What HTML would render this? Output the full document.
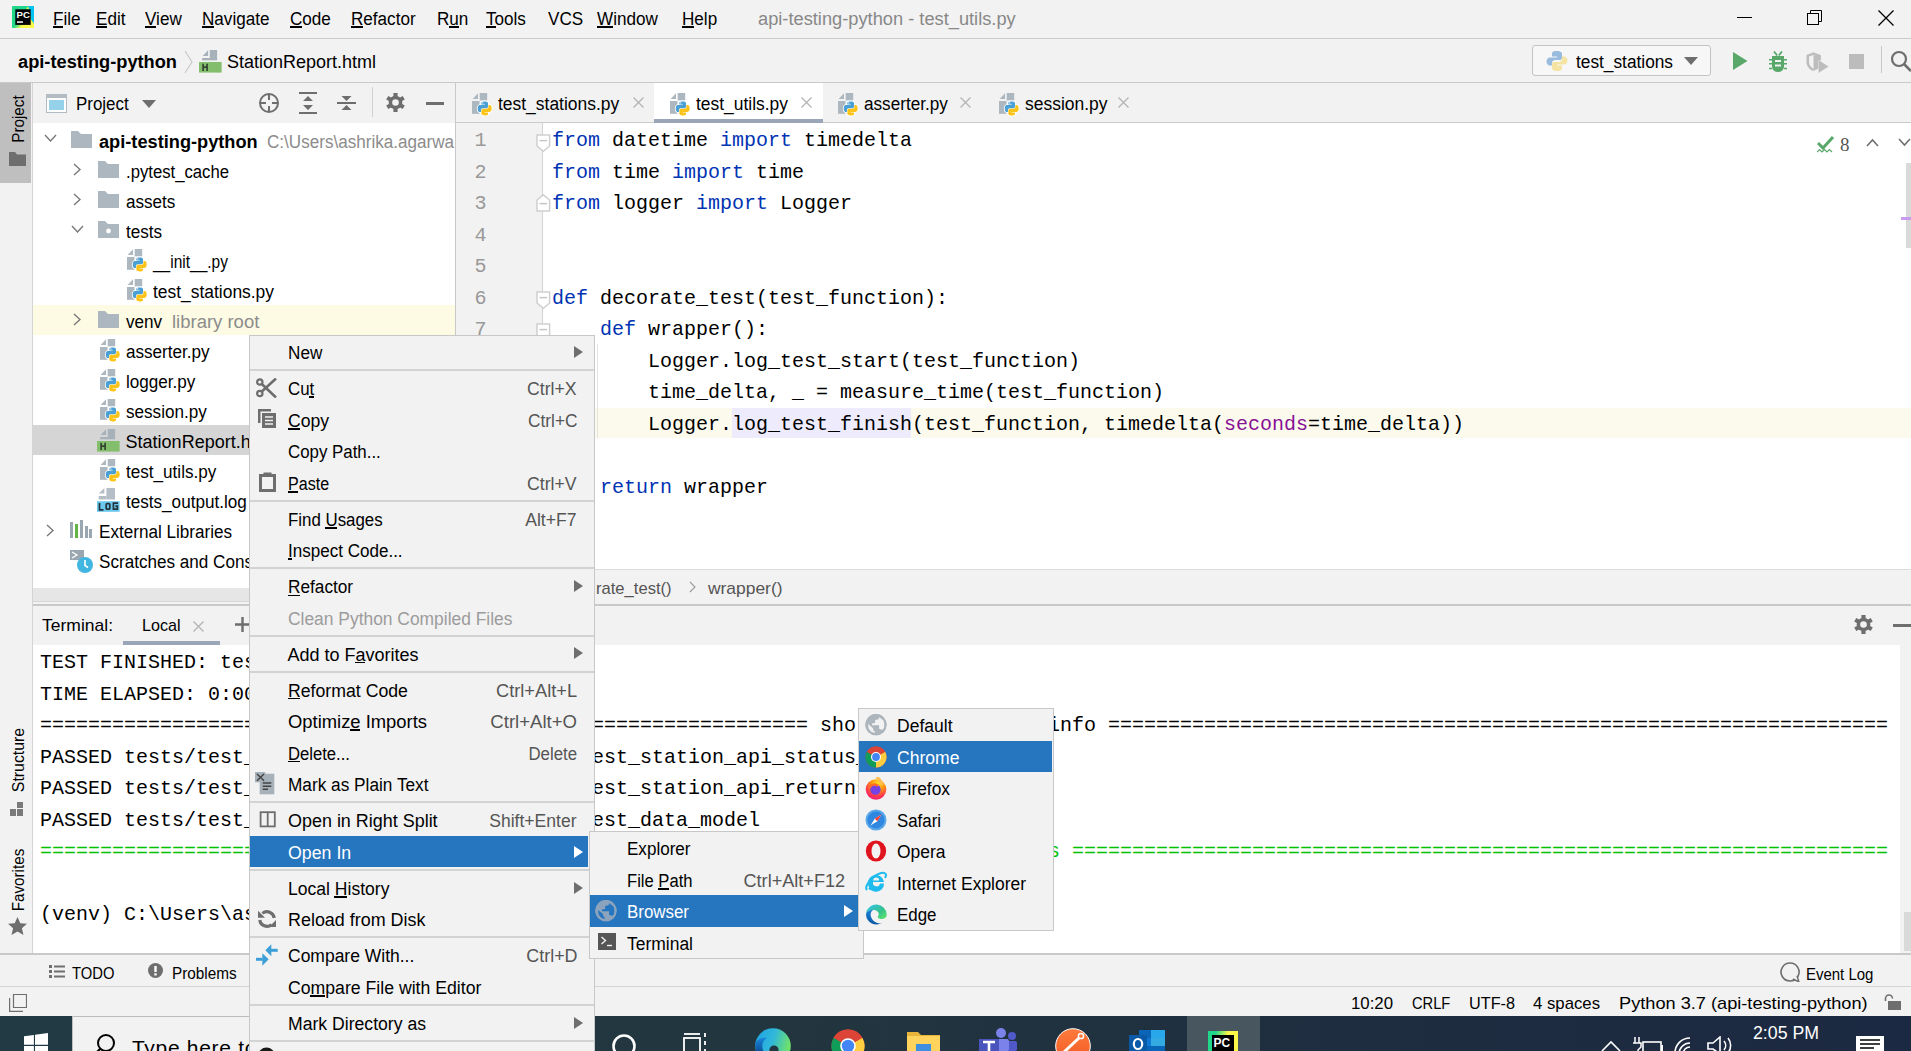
<!DOCTYPE html>
<html><head><meta charset="utf-8"><style>
html,body{margin:0;padding:0;width:1911px;height:1051px;overflow:hidden;background:#f2f2f2;}
body>*{position:absolute;}
.t{white-space:pre;font-family:'Liberation Sans', sans-serif;}

</style></head><body>
<div style="left:0px;top:0px;width:1911px;height:38px;background:#f2f2f2;"></div>
<div style="left:0px;top:38px;width:1911px;height:1px;background:#cbcbcb;"></div>
<svg style="left:12px;top:5.8px;" width="22" height="22" viewBox="0 0 22 22"><defs><linearGradient id="pcg" x1="0.1" y1="0.2" x2="0.9" y2="0.9"><stop offset="0.45" stop-color="#21d789"/><stop offset="0.7" stop-color="#fcf84a"/></linearGradient></defs>
<rect x="0" y="0" width="22" height="22" rx="1" fill="url(#pcg)"/><path d="M16 0H22V17.5L19 13.5z" fill="#07c3f2"/><path d="M14 3.3L15.8 0.3L17.3 3.3z" fill="#c9f257"/>
<rect x="3.3" y="3.3" width="15.4" height="15.6" fill="#000"/>
<text x="4.6" y="12" font-family="Liberation Sans" font-weight="bold" font-size="9.6" fill="#fff">PC</text><rect x="5" y="15.3" width="6" height="1.5" fill="#fff"/></svg>
<div style="left:52.70px;top:26.20px;width:10.45px;height:1.5px;background:#000;"></div>
<div class="t" style="left:52.7px;top:9.00px;line-height:20px;font-size:18px;color:#000;transform:scaleX(0.9500);transform-origin:0 0;">File</div>
<div style="left:96.00px;top:26.20px;width:11.41px;height:1.5px;background:#000;"></div>
<div class="t" style="left:96px;top:9.00px;line-height:20px;font-size:18px;color:#000;transform:scaleX(0.9500);transform-origin:0 0;">Edit</div>
<div style="left:145.00px;top:26.20px;width:11.41px;height:1.5px;background:#000;"></div>
<div class="t" style="left:145px;top:9.00px;line-height:20px;font-size:18px;color:#000;transform:scaleX(0.9500);transform-origin:0 0;">View</div>
<div style="left:201.70px;top:26.20px;width:12.35px;height:1.5px;background:#000;"></div>
<div class="t" style="left:201.7px;top:9.00px;line-height:20px;font-size:18px;color:#000;transform:scaleX(0.9500);transform-origin:0 0;">Navigate</div>
<div style="left:289.60px;top:26.20px;width:12.35px;height:1.5px;background:#000;"></div>
<div class="t" style="left:289.6px;top:9.00px;line-height:20px;font-size:18px;color:#000;transform:scaleX(0.9500);transform-origin:0 0;">Code</div>
<div style="left:350.70px;top:26.20px;width:12.35px;height:1.5px;background:#000;"></div>
<div class="t" style="left:350.7px;top:9.00px;line-height:20px;font-size:18px;color:#000;transform:scaleX(0.9500);transform-origin:0 0;">Refactor</div>
<div style="left:449.15px;top:26.20px;width:9.51px;height:1.5px;background:#000;"></div>
<div class="t" style="left:436.8px;top:9.00px;line-height:20px;font-size:18px;color:#000;transform:scaleX(0.9500);transform-origin:0 0;">Run</div>
<div style="left:485.70px;top:26.20px;width:10.45px;height:1.5px;background:#000;"></div>
<div class="t" style="left:485.7px;top:9.00px;line-height:20px;font-size:18px;color:#000;transform:scaleX(0.9500);transform-origin:0 0;">Tools</div>
<div class="t" style="left:548px;top:9.00px;line-height:20px;font-size:18px;color:#000;transform:scaleX(0.9500);transform-origin:0 0;">VCS</div>
<div style="left:597.00px;top:26.20px;width:16.14px;height:1.5px;background:#000;"></div>
<div class="t" style="left:597px;top:9.00px;line-height:20px;font-size:18px;color:#000;transform:scaleX(0.9500);transform-origin:0 0;">Window</div>
<div style="left:682.00px;top:26.20px;width:12.35px;height:1.5px;background:#000;"></div>
<div class="t" style="left:682px;top:9.00px;line-height:20px;font-size:18px;color:#000;transform:scaleX(0.9500);transform-origin:0 0;">Help</div>
<div class="t" style="left:758px;top:9.00px;line-height:20px;font-size:18px;color:#888;transform:scaleX(1.0141);transform-origin:0 0;">api-testing-python - test_utils.py</div>
<div style="left:1737px;top:17px;width:15px;height:1px;background:#000;"></div>
<svg style="left:1806px;top:9px;" width="18" height="16" viewBox="0 0 18 16"><rect x="1.5" y="4.5" width="11" height="11" fill="none" stroke="#000" stroke-width="1"/><path d="M4.5 4.5V1.5h11v11h-3" fill="none" stroke="#000" stroke-width="1"/></svg>
<svg style="left:1877px;top:9px;" width="18" height="18" viewBox="0 0 18 18"><path d="M1.5 1.5L16.5 16.5M16.5 1.5L1.5 16.5" stroke="#000" stroke-width="1.3"/></svg>
<div style="left:0px;top:39px;width:1911px;height:43px;background:#f2f2f2;"></div>
<div style="left:0px;top:82px;width:1911px;height:1px;background:#c9c9c9;"></div>
<div class="t" style="left:18px;top:52.30px;line-height:20px;font-size:18px;color:#000;font-weight:bold;transform:scaleX(1.0129);transform-origin:0 0;">api-testing-python</div>
<svg style="left:184px;top:50px;" width="9" height="24" viewBox="0 0 9 24"><path d="M1 1L8 12L1 23" fill="none" stroke="#c8c8c8" stroke-width="1.2"/></svg>
<svg style="left:199px;top:50.4px;" width="23" height="23" viewBox="0 0 23 23"><path d="M3.7 6L9.1 0.3V6z" fill="#a7b1b9"/><rect x="10.8" y="0" width="7.3" height="10.3" fill="#a7b1b9"/><rect x="3.1" y="8" width="7.8" height="2.3" fill="#a7b1b9"/>
<rect x="0" y="12" width="22.6" height="10.6" fill="#82be6c"/><path d="M4.1 13.7v7.4M8.1 13.7v7.4M4.1 17.2h4" stroke="#344532" stroke-width="1.7"/></svg>
<div class="t" style="left:227px;top:52.30px;line-height:20px;font-size:18px;color:#000;">StationReport.html</div>
<div style="left:1532px;top:45px;width:179px;height:31px;background:#f7f7f7;border:1px solid #c4c4c4;border-radius:3px;box-sizing:border-box;"></div>
<svg style="left:1546px;top:50px;" width="22" height="22" viewBox="0 0 22 22"><g opacity="0.55"><path d="M10.5 1c-4 0-4.5 1.5-4.5 3v2.5h5v1H4c-2 0-3.5 1.7-3.5 4s1.5 4 3.5 4h2v-2.5c0-1.6 1.3-3 3-3h4.5c1.5 0 2.5-1.2 2.5-2.6V4c0-1.6-1.5-3-5.5-3z" fill="#4d8bc9"/>
<path d="M11.5 21c4 0 4.5-1.5 4.5-3v-2.5h-5v-1h7c2 0 3.5-1.7 3.5-4s-1.5-4-3.5-4h-2v2.5c0 1.6-1.3 3-3 3H8.5C7 12 6 13.2 6 14.6V18c0 1.6 1.5 3 5.5 3z" fill="#f4d35e"/></g></svg>
<div class="t" style="left:1575.5px;top:51.50px;line-height:20px;font-size:18px;color:#000;transform:scaleX(0.9599);transform-origin:0 0;">test_stations</div>
<svg style="left:1684px;top:57px;" width="14" height="8" viewBox="0 0 14 8"><path d="M0 0h14L7 8z" fill="#6e6e6e"/></svg>
<svg style="left:1733px;top:52px;" width="15" height="18" viewBox="0 0 15 18"><path d="M0 0L14.5 9L0 18z" fill="#59a869"/></svg>
<svg style="left:1769px;top:50.5px;" width="18" height="21" viewBox="0 0 18 21"><path d="M3 5h12v10.5a6 5.5 0 0 1 -12 0z" fill="#59a869"/><path d="M5 0.5L8.2 4.5M13 0.5L9.8 4.5" stroke="#59a869" stroke-width="1.8"/><path d="M0 8.7h3M15 8.7h3M0 12.8h3M15 12.8h3M0 17.5h3M15 17.5h3" stroke="#59a869" stroke-width="1.6"/><rect x="6" y="9" width="6" height="2" fill="#f2f2f2"/><rect x="6" y="13.5" width="6" height="2" fill="#f2f2f2"/></svg>
<svg style="left:1806px;top:51.5px;" width="23" height="21" viewBox="0 0 23 21"><path d="M0.5 3L7.5 0.3L14.5 3V8H12V4.5L7.5 3L3 4.5V10c0 3 2 5.5 4.5 6.5V19C3.5 17.8 0.5 14 0.5 10z" fill="#bdbdbd"/><path d="M7.5 3.2L14.8 3.2V8.5H12.2V16.5L7.5 19z" fill="#bdbdbd"/><path d="M12.5 8L22.5 14.5L12.5 21z" fill="#bdbdbd"/></svg>
<div style="left:1848.5px;top:53.5px;width:15px;height:15px;background:#bcbcbc;"></div>
<div style="left:1881px;top:46px;width:1px;height:27px;background:#c9c9c9;"></div>
<svg style="left:1890px;top:50px;" width="21" height="23" viewBox="0 0 21 23"><circle cx="9" cy="9" r="7" fill="none" stroke="#6e6e6e" stroke-width="2.2"/><path d="M14 14L21 21" stroke="#6e6e6e" stroke-width="2.6"/></svg>
<div style="left:0px;top:83px;width:32px;height:870px;background:#f2f2f2;"></div>
<div style="left:0px;top:83px;width:31px;height:100px;background:#bfbfbf;"></div>
<div style="left:32px;top:83px;width:1px;height:870px;background:#d4d4d4;"></div>
<div class="t" style="left:-41.25px;top:106.50px;width:120px;height:24px;line-height:24px;font-size:16px;color:#000;text-align:center;transform:rotate(-90deg) scaleX(0.9500);">Project</div>
<svg style="left:9px;top:151.5px;" width="17" height="14" viewBox="0 0 17 14"><path d="M0 0h6l2 2.5h9V14H0z" fill="#6e6e6e"/></svg>
<div class="t" style="left:-41.05px;top:748.40px;width:120px;height:24px;line-height:24px;font-size:16px;color:#000;text-align:center;transform:rotate(-90deg) scaleX(0.9900);">Structure</div>
<svg style="left:10px;top:802px;" width="14" height="14" viewBox="0 0 14 14"><rect x="0" y="7" width="6" height="7" fill="#7a7a7a"/><rect x="7" y="7" width="6" height="7" fill="#7a7a7a"/><rect x="7" y="0" width="6" height="6" fill="#7a7a7a"/></svg>
<div class="t" style="left:-41.05px;top:867.70px;width:120px;height:24px;line-height:24px;font-size:16px;color:#000;text-align:center;transform:rotate(-90deg) scaleX(0.9500);">Favorites</div>
<svg style="left:8px;top:917px;" width="19" height="18" viewBox="0 0 19 18"><path d="M9.5 0l2.8 6.2l6.7 0.6l-5.1 4.5l1.6 6.7l-6-3.6l-6 3.6l1.6-6.7L0 6.8l6.7-0.6z" fill="#6e6e6e"/></svg>
<div style="left:33px;top:83px;width:422px;height:40px;background:#f2f2f2;"></div>
<div style="left:33px;top:123px;width:422px;height:465px;background:#fff;"></div>
<div style="left:33px;top:588px;width:422px;height:13px;background:#e6e6e6;"></div>
<svg style="left:46px;top:94px;" width="21" height="19" viewBox="0 0 21 19"><rect x="0.5" y="0.5" width="20" height="18" fill="#fff" stroke="#b3bcc3"/><rect x="0" y="0" width="21" height="4" fill="#b3bcc3"/><rect x="3" y="6" width="15" height="10" fill="#95d2ea"/></svg>
<div class="t" style="left:75.8px;top:94.00px;line-height:20px;font-size:18px;color:#000;transform:scaleX(0.9407);transform-origin:0 0;">Project</div>
<svg style="left:142px;top:100px;" width="14" height="8" viewBox="0 0 14 8"><path d="M0 0h14L7 8z" fill="#6e6e6e"/></svg>
<svg style="left:258px;top:92px;" width="22" height="22" viewBox="0 0 22 22"><circle cx="11" cy="11" r="9" fill="none" stroke="#6e6e6e" stroke-width="2"/><path d="M11 2v6M11 14v6M2 11h6M14 11h6" stroke="#6e6e6e" stroke-width="2"/></svg>
<svg style="left:299px;top:92px;" width="18" height="22" viewBox="0 0 18 22"><path d="M0 1h18M0 21h18" stroke="#6e6e6e" stroke-width="2"/><path d="M9 4l5 5H4zM9 18l5-5H4z" fill="#6e6e6e"/></svg>
<svg style="left:337px;top:92px;" width="19" height="22" viewBox="0 0 19 22"><path d="M0 11h19" stroke="#6e6e6e" stroke-width="2"/><path d="M9.5 9l-5-5h10zM9.5 13l-5 5h10z" fill="#6e6e6e"/></svg>
<div style="left:372px;top:87px;width:1px;height:30px;background:#d0d0d0;"></div>
<svg style="left:386px;top:93px;" width="19" height="19" viewBox="0 0 19 19"><circle cx="9.5" cy="9.5" r="6.84" fill="#6e6e6e"/><rect x="7.41" y="0" width="4.18" height="19.00" fill="#6e6e6e" transform="rotate(0 9.5 9.5)"/><rect x="7.41" y="0" width="4.18" height="19.00" fill="#6e6e6e" transform="rotate(60 9.5 9.5)"/><rect x="7.41" y="0" width="4.18" height="19.00" fill="#6e6e6e" transform="rotate(120 9.5 9.5)"/><circle cx="9.5" cy="9.5" r="3.32" fill="#f2f2f2"/></svg>
<div style="left:426px;top:102px;width:18px;height:3px;background:#6e6e6e;"></div>
<svg style="left:44px;top:134px;" width="13" height="8" viewBox="0 0 13 8"><path d="M1 1L6.5 7L12 1" fill="none" stroke="#787878" stroke-width="1.4"/></svg>
<svg style="left:70.5px;top:131px;" width="21" height="17" viewBox="0 0 21 17"><path d="M0 0h7l3 3h11v14H0z" fill="#adb7bf"/></svg>
<div class="t" style="left:98.6px;top:132.00px;line-height:20px;font-size:18px;color:#000;font-weight:bold;transform:scaleX(1.0109);transform-origin:0 0;">api-testing-python</div>
<div class="t" style="left:267.4px;top:132.00px;line-height:20px;font-size:18px;color:#8c8c8c;transform:scaleX(0.9489);transform-origin:0 0;">C:\Users\ashrika.agarwa</div>
<div style="left:455px;top:123px;width:456px;height:0px;background:#fff;"></div>
<svg style="left:73px;top:163px;" width="8" height="13" viewBox="0 0 8 13"><path d="M1 1L7 6.5L1 12" fill="none" stroke="#787878" stroke-width="1.4"/></svg>
<svg style="left:97.5px;top:161px;" width="21" height="17" viewBox="0 0 21 17"><path d="M0 0h7l3 3h11v14H0z" fill="#adb7bf"/></svg>
<div class="t" style="left:125.6px;top:162.00px;line-height:20px;font-size:18px;color:#000;transform:scaleX(0.9274);transform-origin:0 0;">.pytest_cache</div>
<svg style="left:73px;top:193px;" width="8" height="13" viewBox="0 0 8 13"><path d="M1 1L7 6.5L1 12" fill="none" stroke="#787878" stroke-width="1.4"/></svg>
<svg style="left:97.5px;top:191px;" width="21" height="17" viewBox="0 0 21 17"><path d="M0 0h7l3 3h11v14H0z" fill="#adb7bf"/></svg>
<div class="t" style="left:125.6px;top:192.00px;line-height:20px;font-size:18px;color:#000;transform:scaleX(0.9500);transform-origin:0 0;">assets</div>
<svg style="left:71px;top:225px;" width="13" height="8" viewBox="0 0 13 8"><path d="M1 1L6.5 7L12 1" fill="none" stroke="#787878" stroke-width="1.4"/></svg>
<svg style="left:97.5px;top:221px;" width="21" height="17" viewBox="0 0 21 17"><path d="M0 0h7l3 3h11v14H0z" fill="#adb7bf"/><circle cx="10.5" cy="10" r="2.4" fill="#fff"/></svg>
<div class="t" style="left:125.6px;top:222.00px;line-height:20px;font-size:18px;color:#000;transform:scaleX(0.9500);transform-origin:0 0;">tests</div>
<svg style="left:125.8px;top:248.3px;" width="24" height="26" viewBox="0 0 24 26"><g transform="translate(1,1)"><path d="M0.6 6L6 0.3V6z" fill="#adb7bf"/><rect x="7.7" y="0" width="7.5" height="7.4" fill="#adb7bf"/><rect x="0" y="8" width="7.5" height="12.8" fill="#adb7bf"/>
<g transform="translate(5.6,8.4) scale(0.71)"><path d="M9.8 0.2C5 0.2 5.3 2.3 5.3 2.3V4.5H10V5.2H3.4C3.4 5.2 0.2 4.8 0.2 9.9C0.2 15 3 14.8 3 14.8H4.7V12.4C4.7 12.4 4.6 9.6 7.4 9.6H12.1C12.1 9.6 14.7 9.7 14.7 7.1V2.8C14.7 2.8 15.1 0.2 9.8 0.2Z" fill="none" stroke="#fff" stroke-width="2.6"/><path d="M10.2 19.8C15 19.8 14.7 17.7 14.7 17.7V15.5H10V14.8H16.6C16.6 14.8 19.8 15.2 19.8 10.1C19.8 5 17 5.2 17 5.2H15.3V7.6C15.3 7.6 15.4 10.4 12.6 10.4H7.9C7.9 10.4 5.3 10.3 5.3 12.9V17.2C5.3 17.2 4.9 19.8 10.2 19.8Z" fill="none" stroke="#fff" stroke-width="2.6"/><path d="M9.8 0.2C5 0.2 5.3 2.3 5.3 2.3V4.5H10V5.2H3.4C3.4 5.2 0.2 4.8 0.2 9.9C0.2 15 3 14.8 3 14.8H4.7V12.4C4.7 12.4 4.6 9.6 7.4 9.6H12.1C12.1 9.6 14.7 9.7 14.7 7.1V2.8C14.7 2.8 15.1 0.2 9.8 0.2Z" fill="#4a9fd5"/><path d="M10.2 19.8C15 19.8 14.7 17.7 14.7 17.7V15.5H10V14.8H16.6C16.6 14.8 19.8 15.2 19.8 10.1C19.8 5 17 5.2 17 5.2H15.3V7.6C15.3 7.6 15.4 10.4 12.6 10.4H7.9C7.9 10.4 5.3 10.3 5.3 12.9V17.2C5.3 17.2 4.9 19.8 10.2 19.8Z" fill="#fcc419"/><circle cx="7.3" cy="2.2" r="0.9" fill="#fff"/></g></g></svg>
<div class="t" style="left:152.6px;top:252.00px;line-height:20px;font-size:18px;color:#000;transform:scaleX(0.8614);transform-origin:0 0;">__init__.py</div>
<svg style="left:125.8px;top:278.3px;" width="24" height="26" viewBox="0 0 24 26"><g transform="translate(1,1)"><path d="M0.6 6L6 0.3V6z" fill="#adb7bf"/><rect x="7.7" y="0" width="7.5" height="7.4" fill="#adb7bf"/><rect x="0" y="8" width="7.5" height="12.8" fill="#adb7bf"/>
<g transform="translate(5.6,8.4) scale(0.71)"><path d="M9.8 0.2C5 0.2 5.3 2.3 5.3 2.3V4.5H10V5.2H3.4C3.4 5.2 0.2 4.8 0.2 9.9C0.2 15 3 14.8 3 14.8H4.7V12.4C4.7 12.4 4.6 9.6 7.4 9.6H12.1C12.1 9.6 14.7 9.7 14.7 7.1V2.8C14.7 2.8 15.1 0.2 9.8 0.2Z" fill="none" stroke="#fff" stroke-width="2.6"/><path d="M10.2 19.8C15 19.8 14.7 17.7 14.7 17.7V15.5H10V14.8H16.6C16.6 14.8 19.8 15.2 19.8 10.1C19.8 5 17 5.2 17 5.2H15.3V7.6C15.3 7.6 15.4 10.4 12.6 10.4H7.9C7.9 10.4 5.3 10.3 5.3 12.9V17.2C5.3 17.2 4.9 19.8 10.2 19.8Z" fill="none" stroke="#fff" stroke-width="2.6"/><path d="M9.8 0.2C5 0.2 5.3 2.3 5.3 2.3V4.5H10V5.2H3.4C3.4 5.2 0.2 4.8 0.2 9.9C0.2 15 3 14.8 3 14.8H4.7V12.4C4.7 12.4 4.6 9.6 7.4 9.6H12.1C12.1 9.6 14.7 9.7 14.7 7.1V2.8C14.7 2.8 15.1 0.2 9.8 0.2Z" fill="#4a9fd5"/><path d="M10.2 19.8C15 19.8 14.7 17.7 14.7 17.7V15.5H10V14.8H16.6C16.6 14.8 19.8 15.2 19.8 10.1C19.8 5 17 5.2 17 5.2H15.3V7.6C15.3 7.6 15.4 10.4 12.6 10.4H7.9C7.9 10.4 5.3 10.3 5.3 12.9V17.2C5.3 17.2 4.9 19.8 10.2 19.8Z" fill="#fcc419"/><circle cx="7.3" cy="2.2" r="0.9" fill="#fff"/></g></g></svg>
<div class="t" style="left:152.6px;top:282.00px;line-height:20px;font-size:18px;color:#000;transform:scaleX(0.9675);transform-origin:0 0;">test_stations.py</div>
<div style="left:33px;top:305px;width:422px;height:30px;background:#fdfbe3;"></div>
<svg style="left:73px;top:313px;" width="8" height="13" viewBox="0 0 8 13"><path d="M1 1L7 6.5L1 12" fill="none" stroke="#787878" stroke-width="1.4"/></svg>
<svg style="left:97.5px;top:311px;" width="21" height="17" viewBox="0 0 21 17"><path d="M0 0h7l3 3h11v14H0z" fill="#adb7bf"/></svg>
<div class="t" style="left:125.6px;top:312.00px;line-height:20px;font-size:18px;color:#000;transform:scaleX(0.9500);transform-origin:0 0;">venv</div>
<div class="t" style="left:171.5px;top:312.00px;line-height:20px;font-size:18px;color:#8c8c8c;transform:scaleX(1.0268);transform-origin:0 0;">library root</div>
<svg style="left:99.4px;top:338.3px;" width="24" height="26" viewBox="0 0 24 26"><g transform="translate(1,1)"><path d="M0.6 6L6 0.3V6z" fill="#adb7bf"/><rect x="7.7" y="0" width="7.5" height="7.4" fill="#adb7bf"/><rect x="0" y="8" width="7.5" height="12.8" fill="#adb7bf"/>
<g transform="translate(5.6,8.4) scale(0.71)"><path d="M9.8 0.2C5 0.2 5.3 2.3 5.3 2.3V4.5H10V5.2H3.4C3.4 5.2 0.2 4.8 0.2 9.9C0.2 15 3 14.8 3 14.8H4.7V12.4C4.7 12.4 4.6 9.6 7.4 9.6H12.1C12.1 9.6 14.7 9.7 14.7 7.1V2.8C14.7 2.8 15.1 0.2 9.8 0.2Z" fill="none" stroke="#fff" stroke-width="2.6"/><path d="M10.2 19.8C15 19.8 14.7 17.7 14.7 17.7V15.5H10V14.8H16.6C16.6 14.8 19.8 15.2 19.8 10.1C19.8 5 17 5.2 17 5.2H15.3V7.6C15.3 7.6 15.4 10.4 12.6 10.4H7.9C7.9 10.4 5.3 10.3 5.3 12.9V17.2C5.3 17.2 4.9 19.8 10.2 19.8Z" fill="none" stroke="#fff" stroke-width="2.6"/><path d="M9.8 0.2C5 0.2 5.3 2.3 5.3 2.3V4.5H10V5.2H3.4C3.4 5.2 0.2 4.8 0.2 9.9C0.2 15 3 14.8 3 14.8H4.7V12.4C4.7 12.4 4.6 9.6 7.4 9.6H12.1C12.1 9.6 14.7 9.7 14.7 7.1V2.8C14.7 2.8 15.1 0.2 9.8 0.2Z" fill="#4a9fd5"/><path d="M10.2 19.8C15 19.8 14.7 17.7 14.7 17.7V15.5H10V14.8H16.6C16.6 14.8 19.8 15.2 19.8 10.1C19.8 5 17 5.2 17 5.2H15.3V7.6C15.3 7.6 15.4 10.4 12.6 10.4H7.9C7.9 10.4 5.3 10.3 5.3 12.9V17.2C5.3 17.2 4.9 19.8 10.2 19.8Z" fill="#fcc419"/><circle cx="7.3" cy="2.2" r="0.9" fill="#fff"/></g></g></svg>
<div class="t" style="left:125.6px;top:342.00px;line-height:20px;font-size:18px;color:#000;transform:scaleX(0.9500);transform-origin:0 0;">asserter.py</div>
<svg style="left:99.4px;top:368.3px;" width="24" height="26" viewBox="0 0 24 26"><g transform="translate(1,1)"><path d="M0.6 6L6 0.3V6z" fill="#adb7bf"/><rect x="7.7" y="0" width="7.5" height="7.4" fill="#adb7bf"/><rect x="0" y="8" width="7.5" height="12.8" fill="#adb7bf"/>
<g transform="translate(5.6,8.4) scale(0.71)"><path d="M9.8 0.2C5 0.2 5.3 2.3 5.3 2.3V4.5H10V5.2H3.4C3.4 5.2 0.2 4.8 0.2 9.9C0.2 15 3 14.8 3 14.8H4.7V12.4C4.7 12.4 4.6 9.6 7.4 9.6H12.1C12.1 9.6 14.7 9.7 14.7 7.1V2.8C14.7 2.8 15.1 0.2 9.8 0.2Z" fill="none" stroke="#fff" stroke-width="2.6"/><path d="M10.2 19.8C15 19.8 14.7 17.7 14.7 17.7V15.5H10V14.8H16.6C16.6 14.8 19.8 15.2 19.8 10.1C19.8 5 17 5.2 17 5.2H15.3V7.6C15.3 7.6 15.4 10.4 12.6 10.4H7.9C7.9 10.4 5.3 10.3 5.3 12.9V17.2C5.3 17.2 4.9 19.8 10.2 19.8Z" fill="none" stroke="#fff" stroke-width="2.6"/><path d="M9.8 0.2C5 0.2 5.3 2.3 5.3 2.3V4.5H10V5.2H3.4C3.4 5.2 0.2 4.8 0.2 9.9C0.2 15 3 14.8 3 14.8H4.7V12.4C4.7 12.4 4.6 9.6 7.4 9.6H12.1C12.1 9.6 14.7 9.7 14.7 7.1V2.8C14.7 2.8 15.1 0.2 9.8 0.2Z" fill="#4a9fd5"/><path d="M10.2 19.8C15 19.8 14.7 17.7 14.7 17.7V15.5H10V14.8H16.6C16.6 14.8 19.8 15.2 19.8 10.1C19.8 5 17 5.2 17 5.2H15.3V7.6C15.3 7.6 15.4 10.4 12.6 10.4H7.9C7.9 10.4 5.3 10.3 5.3 12.9V17.2C5.3 17.2 4.9 19.8 10.2 19.8Z" fill="#fcc419"/><circle cx="7.3" cy="2.2" r="0.9" fill="#fff"/></g></g></svg>
<div class="t" style="left:125.6px;top:372.00px;line-height:20px;font-size:18px;color:#000;transform:scaleX(0.9500);transform-origin:0 0;">logger.py</div>
<svg style="left:99.4px;top:398.3px;" width="24" height="26" viewBox="0 0 24 26"><g transform="translate(1,1)"><path d="M0.6 6L6 0.3V6z" fill="#adb7bf"/><rect x="7.7" y="0" width="7.5" height="7.4" fill="#adb7bf"/><rect x="0" y="8" width="7.5" height="12.8" fill="#adb7bf"/>
<g transform="translate(5.6,8.4) scale(0.71)"><path d="M9.8 0.2C5 0.2 5.3 2.3 5.3 2.3V4.5H10V5.2H3.4C3.4 5.2 0.2 4.8 0.2 9.9C0.2 15 3 14.8 3 14.8H4.7V12.4C4.7 12.4 4.6 9.6 7.4 9.6H12.1C12.1 9.6 14.7 9.7 14.7 7.1V2.8C14.7 2.8 15.1 0.2 9.8 0.2Z" fill="none" stroke="#fff" stroke-width="2.6"/><path d="M10.2 19.8C15 19.8 14.7 17.7 14.7 17.7V15.5H10V14.8H16.6C16.6 14.8 19.8 15.2 19.8 10.1C19.8 5 17 5.2 17 5.2H15.3V7.6C15.3 7.6 15.4 10.4 12.6 10.4H7.9C7.9 10.4 5.3 10.3 5.3 12.9V17.2C5.3 17.2 4.9 19.8 10.2 19.8Z" fill="none" stroke="#fff" stroke-width="2.6"/><path d="M9.8 0.2C5 0.2 5.3 2.3 5.3 2.3V4.5H10V5.2H3.4C3.4 5.2 0.2 4.8 0.2 9.9C0.2 15 3 14.8 3 14.8H4.7V12.4C4.7 12.4 4.6 9.6 7.4 9.6H12.1C12.1 9.6 14.7 9.7 14.7 7.1V2.8C14.7 2.8 15.1 0.2 9.8 0.2Z" fill="#4a9fd5"/><path d="M10.2 19.8C15 19.8 14.7 17.7 14.7 17.7V15.5H10V14.8H16.6C16.6 14.8 19.8 15.2 19.8 10.1C19.8 5 17 5.2 17 5.2H15.3V7.6C15.3 7.6 15.4 10.4 12.6 10.4H7.9C7.9 10.4 5.3 10.3 5.3 12.9V17.2C5.3 17.2 4.9 19.8 10.2 19.8Z" fill="#fcc419"/><circle cx="7.3" cy="2.2" r="0.9" fill="#fff"/></g></g></svg>
<div class="t" style="left:125.6px;top:402.00px;line-height:20px;font-size:18px;color:#000;transform:scaleX(0.9500);transform-origin:0 0;">session.py</div>
<div style="left:33px;top:425px;width:422px;height:30px;background:#d5d5d5;"></div>
<svg style="left:97.3px;top:429.3px;" width="23" height="23" viewBox="0 0 23 23"><path d="M3.7 6L9.1 0.3V6z" fill="#a7b1b9"/><rect x="10.8" y="0" width="7.3" height="10.3" fill="#a7b1b9"/><rect x="3.1" y="8" width="7.8" height="2.3" fill="#a7b1b9"/>
<rect x="0" y="12" width="22.6" height="10.6" fill="#82be6c"/><path d="M4.1 13.7v7.4M8.1 13.7v7.4M4.1 17.2h4" stroke="#344532" stroke-width="1.7"/></svg>
<div class="t" style="left:125.6px;top:432.00px;line-height:20px;font-size:18px;color:#000;">StationReport.html</div>
<svg style="left:99.4px;top:458.3px;" width="24" height="26" viewBox="0 0 24 26"><g transform="translate(1,1)"><path d="M0.6 6L6 0.3V6z" fill="#adb7bf"/><rect x="7.7" y="0" width="7.5" height="7.4" fill="#adb7bf"/><rect x="0" y="8" width="7.5" height="12.8" fill="#adb7bf"/>
<g transform="translate(5.6,8.4) scale(0.71)"><path d="M9.8 0.2C5 0.2 5.3 2.3 5.3 2.3V4.5H10V5.2H3.4C3.4 5.2 0.2 4.8 0.2 9.9C0.2 15 3 14.8 3 14.8H4.7V12.4C4.7 12.4 4.6 9.6 7.4 9.6H12.1C12.1 9.6 14.7 9.7 14.7 7.1V2.8C14.7 2.8 15.1 0.2 9.8 0.2Z" fill="none" stroke="#fff" stroke-width="2.6"/><path d="M10.2 19.8C15 19.8 14.7 17.7 14.7 17.7V15.5H10V14.8H16.6C16.6 14.8 19.8 15.2 19.8 10.1C19.8 5 17 5.2 17 5.2H15.3V7.6C15.3 7.6 15.4 10.4 12.6 10.4H7.9C7.9 10.4 5.3 10.3 5.3 12.9V17.2C5.3 17.2 4.9 19.8 10.2 19.8Z" fill="none" stroke="#fff" stroke-width="2.6"/><path d="M9.8 0.2C5 0.2 5.3 2.3 5.3 2.3V4.5H10V5.2H3.4C3.4 5.2 0.2 4.8 0.2 9.9C0.2 15 3 14.8 3 14.8H4.7V12.4C4.7 12.4 4.6 9.6 7.4 9.6H12.1C12.1 9.6 14.7 9.7 14.7 7.1V2.8C14.7 2.8 15.1 0.2 9.8 0.2Z" fill="#4a9fd5"/><path d="M10.2 19.8C15 19.8 14.7 17.7 14.7 17.7V15.5H10V14.8H16.6C16.6 14.8 19.8 15.2 19.8 10.1C19.8 5 17 5.2 17 5.2H15.3V7.6C15.3 7.6 15.4 10.4 12.6 10.4H7.9C7.9 10.4 5.3 10.3 5.3 12.9V17.2C5.3 17.2 4.9 19.8 10.2 19.8Z" fill="#fcc419"/><circle cx="7.3" cy="2.2" r="0.9" fill="#fff"/></g></g></svg>
<div class="t" style="left:125.6px;top:462.00px;line-height:20px;font-size:18px;color:#000;transform:scaleX(0.9500);transform-origin:0 0;">test_utils.py</div>
<svg style="left:97.3px;top:488.1px;" width="23" height="24" viewBox="0 0 23 24"><path d="M1.7 5.5L7.4 0V5.5z" fill="#b5bec6"/><rect x="9.4" y="0" width="8.6" height="11.5" fill="#b5bec6"/><rect x="1.7" y="8" width="7.8" height="3.5" fill="#b5bec6"/>
<rect x="0" y="13.2" width="22.6" height="10.6" fill="#6cc8ee"/><path d="M2.5 14.9v7h4" fill="none" stroke="#23343c" stroke-width="1.7"/><rect x="9.2" y="15.6" width="3.6" height="5.6" rx="1" fill="none" stroke="#23343c" stroke-width="1.7"/><path d="M21 15.2h-4.6v6h4v-3h-2" fill="none" stroke="#23343c" stroke-width="1.7"/></svg>
<div class="t" style="left:125.6px;top:492.00px;line-height:20px;font-size:18px;color:#000;transform:scaleX(0.9500);transform-origin:0 0;">tests_output.log</div>
<svg style="left:45.5px;top:524px;" width="8" height="13" viewBox="0 0 8 13"><path d="M1 1L7 6.5L1 12" fill="none" stroke="#787878" stroke-width="1.4"/></svg>
<svg style="left:70px;top:520px;" width="22" height="18" viewBox="0 0 22 18"><rect x="0" y="2" width="3" height="16" fill="#9aa7b0"/><rect x="5" y="4" width="3" height="14" fill="#62b543"/><rect x="10" y="0" width="3" height="18" fill="#9aa7b0"/><rect x="15" y="6" width="3" height="12" fill="#9aa7b0"/><rect x="19" y="9" width="3" height="9" fill="#9aa7b0"/></svg>
<div class="t" style="left:98.9px;top:522.00px;line-height:20px;font-size:18px;color:#000;transform:scaleX(0.9500);transform-origin:0 0;">External Libraries</div>
<svg style="left:70px;top:549.5px;" width="23" height="23" viewBox="0 0 23 23"><path d="M0 0h14v10H0z" fill="#9aa7b0"/><path d="M2 2l5 3l-5 3" fill="none" stroke="#fff" stroke-width="1.3"/><circle cx="15" cy="15" r="8" fill="#40b6e0"/><path d="M15 10v5.5l3 2" fill="none" stroke="#fff" stroke-width="1.6"/></svg>
<div class="t" style="left:98.9px;top:552.00px;line-height:20px;font-size:18px;color:#000;transform:scaleX(0.9500);transform-origin:0 0;">Scratches and Consoles</div>
<div style="left:455px;top:83px;width:1px;height:522px;background:#c9c9c9;"></div>
<div style="left:456px;top:83px;width:1455px;height:40px;background:#f2f2f2;"></div>
<div style="left:456px;top:122px;width:1455px;height:2px;background:#cbcbcb;"></div>
<div style="left:654px;top:83px;width:168.6px;height:40px;background:#fff;"></div>
<div style="left:654px;top:119px;width:168.6px;height:4.5px;background:#9aa5b8;"></div>
<svg style="left:471px;top:91.5px;" width="24" height="26" viewBox="0 0 24 26"><g transform="translate(1,1)"><path d="M0.6 6L6 0.3V6z" fill="#adb7bf"/><rect x="7.7" y="0" width="7.5" height="7.4" fill="#adb7bf"/><rect x="0" y="8" width="7.5" height="12.8" fill="#adb7bf"/>
<g transform="translate(5.6,8.4) scale(0.71)"><path d="M9.8 0.2C5 0.2 5.3 2.3 5.3 2.3V4.5H10V5.2H3.4C3.4 5.2 0.2 4.8 0.2 9.9C0.2 15 3 14.8 3 14.8H4.7V12.4C4.7 12.4 4.6 9.6 7.4 9.6H12.1C12.1 9.6 14.7 9.7 14.7 7.1V2.8C14.7 2.8 15.1 0.2 9.8 0.2Z" fill="none" stroke="#fff" stroke-width="2.6"/><path d="M10.2 19.8C15 19.8 14.7 17.7 14.7 17.7V15.5H10V14.8H16.6C16.6 14.8 19.8 15.2 19.8 10.1C19.8 5 17 5.2 17 5.2H15.3V7.6C15.3 7.6 15.4 10.4 12.6 10.4H7.9C7.9 10.4 5.3 10.3 5.3 12.9V17.2C5.3 17.2 4.9 19.8 10.2 19.8Z" fill="none" stroke="#fff" stroke-width="2.6"/><path d="M9.8 0.2C5 0.2 5.3 2.3 5.3 2.3V4.5H10V5.2H3.4C3.4 5.2 0.2 4.8 0.2 9.9C0.2 15 3 14.8 3 14.8H4.7V12.4C4.7 12.4 4.6 9.6 7.4 9.6H12.1C12.1 9.6 14.7 9.7 14.7 7.1V2.8C14.7 2.8 15.1 0.2 9.8 0.2Z" fill="#4a9fd5"/><path d="M10.2 19.8C15 19.8 14.7 17.7 14.7 17.7V15.5H10V14.8H16.6C16.6 14.8 19.8 15.2 19.8 10.1C19.8 5 17 5.2 17 5.2H15.3V7.6C15.3 7.6 15.4 10.4 12.6 10.4H7.9C7.9 10.4 5.3 10.3 5.3 12.9V17.2C5.3 17.2 4.9 19.8 10.2 19.8Z" fill="#fcc419"/><circle cx="7.3" cy="2.2" r="0.9" fill="#fff"/></g></g></svg>
<div class="t" style="left:498.3px;top:94.00px;line-height:20px;font-size:18px;color:#000;transform:scaleX(0.9691);transform-origin:0 0;">test_stations.py</div>
<svg style="left:632.5px;top:97px;" width="11" height="11" viewBox="0 0 11 11"><path d="M0.5 0.5L10.5 10.5M10.5 0.5L0.5 10.5" stroke="#b4b4b4" stroke-width="1.3"/></svg>
<svg style="left:668.7px;top:91.5px;" width="24" height="26" viewBox="0 0 24 26"><g transform="translate(1,1)"><path d="M0.6 6L6 0.3V6z" fill="#adb7bf"/><rect x="7.7" y="0" width="7.5" height="7.4" fill="#adb7bf"/><rect x="0" y="8" width="7.5" height="12.8" fill="#adb7bf"/>
<g transform="translate(5.6,8.4) scale(0.71)"><path d="M9.8 0.2C5 0.2 5.3 2.3 5.3 2.3V4.5H10V5.2H3.4C3.4 5.2 0.2 4.8 0.2 9.9C0.2 15 3 14.8 3 14.8H4.7V12.4C4.7 12.4 4.6 9.6 7.4 9.6H12.1C12.1 9.6 14.7 9.7 14.7 7.1V2.8C14.7 2.8 15.1 0.2 9.8 0.2Z" fill="none" stroke="#fff" stroke-width="2.6"/><path d="M10.2 19.8C15 19.8 14.7 17.7 14.7 17.7V15.5H10V14.8H16.6C16.6 14.8 19.8 15.2 19.8 10.1C19.8 5 17 5.2 17 5.2H15.3V7.6C15.3 7.6 15.4 10.4 12.6 10.4H7.9C7.9 10.4 5.3 10.3 5.3 12.9V17.2C5.3 17.2 4.9 19.8 10.2 19.8Z" fill="none" stroke="#fff" stroke-width="2.6"/><path d="M9.8 0.2C5 0.2 5.3 2.3 5.3 2.3V4.5H10V5.2H3.4C3.4 5.2 0.2 4.8 0.2 9.9C0.2 15 3 14.8 3 14.8H4.7V12.4C4.7 12.4 4.6 9.6 7.4 9.6H12.1C12.1 9.6 14.7 9.7 14.7 7.1V2.8C14.7 2.8 15.1 0.2 9.8 0.2Z" fill="#4a9fd5"/><path d="M10.2 19.8C15 19.8 14.7 17.7 14.7 17.7V15.5H10V14.8H16.6C16.6 14.8 19.8 15.2 19.8 10.1C19.8 5 17 5.2 17 5.2H15.3V7.6C15.3 7.6 15.4 10.4 12.6 10.4H7.9C7.9 10.4 5.3 10.3 5.3 12.9V17.2C5.3 17.2 4.9 19.8 10.2 19.8Z" fill="#fcc419"/><circle cx="7.3" cy="2.2" r="0.9" fill="#fff"/></g></g></svg>
<div class="t" style="left:696px;top:94.00px;line-height:20px;font-size:18px;color:#000;transform:scaleX(0.9680);transform-origin:0 0;">test_utils.py</div>
<svg style="left:800.5px;top:97px;" width="11" height="11" viewBox="0 0 11 11"><path d="M0.5 0.5L10.5 10.5M10.5 0.5L0.5 10.5" stroke="#b4b4b4" stroke-width="1.3"/></svg>
<svg style="left:837.3px;top:91.5px;" width="24" height="26" viewBox="0 0 24 26"><g transform="translate(1,1)"><path d="M0.6 6L6 0.3V6z" fill="#adb7bf"/><rect x="7.7" y="0" width="7.5" height="7.4" fill="#adb7bf"/><rect x="0" y="8" width="7.5" height="12.8" fill="#adb7bf"/>
<g transform="translate(5.6,8.4) scale(0.71)"><path d="M9.8 0.2C5 0.2 5.3 2.3 5.3 2.3V4.5H10V5.2H3.4C3.4 5.2 0.2 4.8 0.2 9.9C0.2 15 3 14.8 3 14.8H4.7V12.4C4.7 12.4 4.6 9.6 7.4 9.6H12.1C12.1 9.6 14.7 9.7 14.7 7.1V2.8C14.7 2.8 15.1 0.2 9.8 0.2Z" fill="none" stroke="#fff" stroke-width="2.6"/><path d="M10.2 19.8C15 19.8 14.7 17.7 14.7 17.7V15.5H10V14.8H16.6C16.6 14.8 19.8 15.2 19.8 10.1C19.8 5 17 5.2 17 5.2H15.3V7.6C15.3 7.6 15.4 10.4 12.6 10.4H7.9C7.9 10.4 5.3 10.3 5.3 12.9V17.2C5.3 17.2 4.9 19.8 10.2 19.8Z" fill="none" stroke="#fff" stroke-width="2.6"/><path d="M9.8 0.2C5 0.2 5.3 2.3 5.3 2.3V4.5H10V5.2H3.4C3.4 5.2 0.2 4.8 0.2 9.9C0.2 15 3 14.8 3 14.8H4.7V12.4C4.7 12.4 4.6 9.6 7.4 9.6H12.1C12.1 9.6 14.7 9.7 14.7 7.1V2.8C14.7 2.8 15.1 0.2 9.8 0.2Z" fill="#4a9fd5"/><path d="M10.2 19.8C15 19.8 14.7 17.7 14.7 17.7V15.5H10V14.8H16.6C16.6 14.8 19.8 15.2 19.8 10.1C19.8 5 17 5.2 17 5.2H15.3V7.6C15.3 7.6 15.4 10.4 12.6 10.4H7.9C7.9 10.4 5.3 10.3 5.3 12.9V17.2C5.3 17.2 4.9 19.8 10.2 19.8Z" fill="#fcc419"/><circle cx="7.3" cy="2.2" r="0.9" fill="#fff"/></g></g></svg>
<div class="t" style="left:864.4px;top:94.00px;line-height:20px;font-size:18px;color:#000;transform:scaleX(0.9518);transform-origin:0 0;">asserter.py</div>
<svg style="left:959.5px;top:97px;" width="11" height="11" viewBox="0 0 11 11"><path d="M0.5 0.5L10.5 10.5M10.5 0.5L0.5 10.5" stroke="#b4b4b4" stroke-width="1.3"/></svg>
<svg style="left:997.5px;top:91.5px;" width="24" height="26" viewBox="0 0 24 26"><g transform="translate(1,1)"><path d="M0.6 6L6 0.3V6z" fill="#adb7bf"/><rect x="7.7" y="0" width="7.5" height="7.4" fill="#adb7bf"/><rect x="0" y="8" width="7.5" height="12.8" fill="#adb7bf"/>
<g transform="translate(5.6,8.4) scale(0.71)"><path d="M9.8 0.2C5 0.2 5.3 2.3 5.3 2.3V4.5H10V5.2H3.4C3.4 5.2 0.2 4.8 0.2 9.9C0.2 15 3 14.8 3 14.8H4.7V12.4C4.7 12.4 4.6 9.6 7.4 9.6H12.1C12.1 9.6 14.7 9.7 14.7 7.1V2.8C14.7 2.8 15.1 0.2 9.8 0.2Z" fill="none" stroke="#fff" stroke-width="2.6"/><path d="M10.2 19.8C15 19.8 14.7 17.7 14.7 17.7V15.5H10V14.8H16.6C16.6 14.8 19.8 15.2 19.8 10.1C19.8 5 17 5.2 17 5.2H15.3V7.6C15.3 7.6 15.4 10.4 12.6 10.4H7.9C7.9 10.4 5.3 10.3 5.3 12.9V17.2C5.3 17.2 4.9 19.8 10.2 19.8Z" fill="none" stroke="#fff" stroke-width="2.6"/><path d="M9.8 0.2C5 0.2 5.3 2.3 5.3 2.3V4.5H10V5.2H3.4C3.4 5.2 0.2 4.8 0.2 9.9C0.2 15 3 14.8 3 14.8H4.7V12.4C4.7 12.4 4.6 9.6 7.4 9.6H12.1C12.1 9.6 14.7 9.7 14.7 7.1V2.8C14.7 2.8 15.1 0.2 9.8 0.2Z" fill="#4a9fd5"/><path d="M10.2 19.8C15 19.8 14.7 17.7 14.7 17.7V15.5H10V14.8H16.6C16.6 14.8 19.8 15.2 19.8 10.1C19.8 5 17 5.2 17 5.2H15.3V7.6C15.3 7.6 15.4 10.4 12.6 10.4H7.9C7.9 10.4 5.3 10.3 5.3 12.9V17.2C5.3 17.2 4.9 19.8 10.2 19.8Z" fill="#fcc419"/><circle cx="7.3" cy="2.2" r="0.9" fill="#fff"/></g></g></svg>
<div class="t" style="left:1025px;top:94.00px;line-height:20px;font-size:18px;color:#000;transform:scaleX(0.9701);transform-origin:0 0;">session.py</div>
<svg style="left:1118.0px;top:97px;" width="11" height="11" viewBox="0 0 11 11"><path d="M0.5 0.5L10.5 10.5M10.5 0.5L0.5 10.5" stroke="#b4b4b4" stroke-width="1.3"/></svg>
<div style="left:456px;top:123px;width:86px;height:446px;background:#f2f2f2;"></div>
<div style="left:541.5px;top:123px;width:1.5px;height:446px;background:#d3d3d3;"></div>
<div style="left:543px;top:123px;width:1357px;height:446px;background:#fff;"></div>
<div style="left:1900px;top:123px;width:11px;height:446px;background:#fff;"></div>
<div style="left:1906px;top:163px;width:5px;height:85px;background:#dadada;"></div>
<div style="left:1901px;top:217px;width:10px;height:3px;background:#c79cf0;"></div>
<div style="left:543px;top:407.6px;width:1368px;height:30px;background:#fcfaed;"></div>
<div style="left:731.7px;top:407.6px;width:179.1px;height:30px;background:#edebfc;"></div>
<div style="left:597px;top:344px;width:1px;height:94px;background:#e3e3e3;"></div>
<div class="t" style="left:474.50px;top:129.00px;line-height:23px;font-size:20px;color:#999999;font-family:'Liberation Mono', monospace;">1</div>
<div class="t" style="left:474.50px;top:160.55px;line-height:23px;font-size:20px;color:#999999;font-family:'Liberation Mono', monospace;">2</div>
<div class="t" style="left:474.50px;top:192.10px;line-height:23px;font-size:20px;color:#999999;font-family:'Liberation Mono', monospace;">3</div>
<div class="t" style="left:474.50px;top:223.65px;line-height:23px;font-size:20px;color:#999999;font-family:'Liberation Mono', monospace;">4</div>
<div class="t" style="left:474.50px;top:255.20px;line-height:23px;font-size:20px;color:#999999;font-family:'Liberation Mono', monospace;">5</div>
<div class="t" style="left:474.50px;top:286.75px;line-height:23px;font-size:20px;color:#999999;font-family:'Liberation Mono', monospace;">6</div>
<div class="t" style="left:474.50px;top:318.30px;line-height:23px;font-size:20px;color:#999999;font-family:'Liberation Mono', monospace;">7</div>
<div class="t" style="left:474.50px;top:349.85px;line-height:23px;font-size:20px;color:#999999;font-family:'Liberation Mono', monospace;">8</div>
<div class="t" style="left:474.50px;top:381.40px;line-height:23px;font-size:20px;color:#999999;font-family:'Liberation Mono', monospace;">9</div>
<div class="t" style="left:462.50px;top:412.95px;line-height:23px;font-size:20px;color:#999999;font-family:'Liberation Mono', monospace;">10</div>
<div class="t" style="left:462.50px;top:444.50px;line-height:23px;font-size:20px;color:#999999;font-family:'Liberation Mono', monospace;">11</div>
<div class="t" style="left:462.50px;top:476.05px;line-height:23px;font-size:20px;color:#999999;font-family:'Liberation Mono', monospace;">12</div>
<svg style="left:535.8px;top:133.6px;" width="16" height="20" viewBox="0 0 16 20"><path d="M1 1h12.6v11L7.3 17.3L1 12z" fill="#fff" stroke="#cfcfcf" stroke-width="1.5"/><path d="M3.5 6.6h7.6" stroke="#c6c6c6" stroke-width="1.5"/></svg>
<svg style="left:535.8px;top:193.5px;" width="16" height="20" viewBox="0 0 16 20"><path d="M1 17h12.6V6L7.3 0.8L1 6z" fill="#fff" stroke="#cfcfcf" stroke-width="1.5"/><path d="M3.5 9.6h7.6" stroke="#c6c6c6" stroke-width="1.5"/></svg>
<svg style="left:535.8px;top:291.4px;" width="16" height="20" viewBox="0 0 16 20"><path d="M1 1h12.6v11L7.3 17.3L1 12z" fill="#fff" stroke="#cfcfcf" stroke-width="1.5"/><path d="M3.5 6.6h7.6" stroke="#c6c6c6" stroke-width="1.5"/></svg>
<svg style="left:535.8px;top:322.9px;" width="16" height="20" viewBox="0 0 16 20"><path d="M1 1h12.6v11L7.3 17.3L1 12z" fill="#fff" stroke="#cfcfcf" stroke-width="1.5"/><path d="M3.5 6.6h7.6" stroke="#c6c6c6" stroke-width="1.5"/></svg>
<div class="t" style="left:551.6px;top:129.00px;line-height:23px;font-size:21px;color:#000000;font-family:'Liberation Mono', monospace;transform:scaleX(0.9522);transform-origin:0 0;"><span style="color:#0033b3">from</span> datetime <span style="color:#0033b3">import</span> timedelta</div>
<div class="t" style="left:551.6px;top:160.55px;line-height:23px;font-size:21px;color:#000000;font-family:'Liberation Mono', monospace;transform:scaleX(0.9522);transform-origin:0 0;"><span style="color:#0033b3">from</span> time <span style="color:#0033b3">import</span> time</div>
<div class="t" style="left:551.6px;top:192.10px;line-height:23px;font-size:21px;color:#000000;font-family:'Liberation Mono', monospace;transform:scaleX(0.9522);transform-origin:0 0;"><span style="color:#0033b3">from</span> logger <span style="color:#0033b3">import</span> Logger</div>
<div class="t" style="left:551.6px;top:286.75px;line-height:23px;font-size:21px;color:#000000;font-family:'Liberation Mono', monospace;transform:scaleX(0.9522);transform-origin:0 0;"><span style="color:#0033b3">def</span> decorate_test(test_function):</div>
<div class="t" style="left:551.6px;top:318.30px;line-height:23px;font-size:21px;color:#000000;font-family:'Liberation Mono', monospace;transform:scaleX(0.9522);transform-origin:0 0;">    <span style="color:#0033b3">def</span> wrapper():</div>
<div class="t" style="left:551.6px;top:349.85px;line-height:23px;font-size:21px;color:#000000;font-family:'Liberation Mono', monospace;transform:scaleX(0.9522);transform-origin:0 0;">        Logger.log_test_start(test_function)</div>
<div class="t" style="left:551.6px;top:381.40px;line-height:23px;font-size:21px;color:#000000;font-family:'Liberation Mono', monospace;transform:scaleX(0.9522);transform-origin:0 0;">        time_delta, _ = measure_time(test_function)</div>
<div class="t" style="left:551.6px;top:412.95px;line-height:23px;font-size:21px;color:#000000;font-family:'Liberation Mono', monospace;transform:scaleX(0.9522);transform-origin:0 0;">        Logger.log_test_finish(test_function, timedelta(<span style="color:#871094">seconds</span>=time_delta))</div>
<div class="t" style="left:551.6px;top:476.05px;line-height:23px;font-size:21px;color:#000000;font-family:'Liberation Mono', monospace;transform:scaleX(0.9522);transform-origin:0 0;">    <span style="color:#0033b3">return</span> wrapper</div>
<svg style="left:1817px;top:135px;" width="18" height="19" viewBox="0 0 18 19"><path d="M1 8l5 5l10-11" fill="none" stroke="#59a869" stroke-width="3"/><path d="M0 17l2.5-2.5l2.5 2.5l2.5-2.5l2.5 2.5l2.5-2.5l2.5 2.5" fill="none" stroke="#59a869" stroke-width="1.2"/></svg>
<div class="t" style="left:1840px;top:134.00px;line-height:21px;font-size:19px;color:#555;font-family:'Liberation Serif',serif;">8</div>
<svg style="left:1866px;top:138px;" width="13" height="9" viewBox="0 0 13 9"><path d="M1 8L6.5 2L12 8" fill="none" stroke="#6e6e6e" stroke-width="1.6"/></svg>
<svg style="left:1898px;top:138px;" width="13" height="9" viewBox="0 0 13 9"><path d="M1 1L6.5 7L12 1" fill="none" stroke="#6e6e6e" stroke-width="1.6"/></svg>
<div style="left:456px;top:569px;width:1455px;height:36px;background:#f2f2f2;"></div>
<div style="left:456px;top:569px;width:1455px;height:1px;background:#dcdcdc;"></div>
<div style="left:456px;top:604px;width:1455px;height:2px;background:#c9c9c9;"></div>
<div class="t" style="left:596px;top:579.20px;line-height:19px;font-size:17px;color:#555;transform:scaleX(0.9758);transform-origin:0 0;">rate_test()</div>
<svg style="left:689px;top:581px;" width="7" height="12" viewBox="0 0 7 12"><path d="M1 1L6 6L1 11" fill="none" stroke="#9a9a9a" stroke-width="1.1"/></svg>
<div class="t" style="left:708px;top:579.20px;line-height:19px;font-size:17px;color:#555;transform:scaleX(1.0242);transform-origin:0 0;">wrapper()</div>
<div style="left:33px;top:601px;width:422px;height:5px;background:#f2f2f2;"></div>
<div style="left:33px;top:601px;width:422px;height:1px;background:#d6d6d6;"></div>
<div style="left:33px;top:604px;width:422px;height:2px;background:#c9c9c9;"></div>
<div style="left:33px;top:606px;width:1878px;height:39px;background:#f2f2f2;"></div>
<div class="t" style="left:42px;top:616.40px;line-height:19px;font-size:17px;color:#000;transform:scaleX(1.0295);transform-origin:0 0;">Terminal:</div>
<div class="t" style="left:141.5px;top:616.40px;line-height:19px;font-size:17px;color:#000;transform:scaleX(0.9473);transform-origin:0 0;">Local</div>
<svg style="left:192.5px;top:620.5px;" width="11" height="11" viewBox="0 0 11 11"><path d="M0.5 0.5L10.5 10.5M10.5 0.5L0.5 10.5" stroke="#b4b4b4" stroke-width="1.3"/></svg>
<div style="left:123px;top:641px;width:97px;height:4px;background:#9aa5b8;"></div>
<svg style="left:235px;top:617px;" width="15" height="15" viewBox="0 0 15 15"><path d="M7.5 0v15M0 7.5h15" stroke="#6e6e6e" stroke-width="2.4"/></svg>
<svg style="left:1854px;top:615px;" width="19" height="19" viewBox="0 0 19 19"><circle cx="9.5" cy="9.5" r="6.84" fill="#6e6e6e"/><rect x="7.41" y="0" width="4.18" height="19.00" fill="#6e6e6e" transform="rotate(0 9.5 9.5)"/><rect x="7.41" y="0" width="4.18" height="19.00" fill="#6e6e6e" transform="rotate(60 9.5 9.5)"/><rect x="7.41" y="0" width="4.18" height="19.00" fill="#6e6e6e" transform="rotate(120 9.5 9.5)"/><circle cx="9.5" cy="9.5" r="3.32" fill="#f2f2f2"/></svg>
<div style="left:1893px;top:624px;width:18px;height:3px;background:#6e6e6e;"></div>
<div style="left:33px;top:645px;width:1867px;height:308px;background:#fff;"></div>
<div style="left:1900px;top:645px;width:11px;height:308px;background:#f2f2f2;"></div>
<div style="left:1904px;top:912px;width:7px;height:39px;background:#d9d9d9;"></div>
<div class="t" style="left:40px;top:651.00px;line-height:23px;font-size:21px;color:#000;font-family:'Liberation Mono', monospace;transform:scaleX(0.9522);transform-origin:0 0;">TEST FINISHED: test_station_api_status_code</div>
<div class="t" style="left:40px;top:682.50px;line-height:23px;font-size:21px;color:#000;font-family:'Liberation Mono', monospace;transform:scaleX(0.9522);transform-origin:0 0;">TIME ELAPSED: 0:00:00.815472</div>
<div class="t" style="left:40px;top:714.00px;line-height:23px;font-size:21px;color:#000;font-family:'Liberation Mono', monospace;transform:scaleX(0.9522);transform-origin:0 0;">================================================================ short test summary info =================================================================</div>
<div class="t" style="left:40px;top:745.50px;line-height:23px;font-size:21px;color:#000;font-family:'Liberation Mono', monospace;transform:scaleX(0.9522);transform-origin:0 0;">PASSED tests/test_stations.py::TestStations::test_station_api_status_code</div>
<div class="t" style="left:40px;top:777.00px;line-height:23px;font-size:21px;color:#000;font-family:'Liberation Mono', monospace;transform:scaleX(0.9522);transform-origin:0 0;">PASSED tests/test_stations.py::TestStations::test_station_api_returns_data</div>
<div class="t" style="left:40px;top:808.50px;line-height:23px;font-size:21px;color:#000;font-family:'Liberation Mono', monospace;transform:scaleX(0.9522);transform-origin:0 0;">PASSED tests/test_stations.py::TestStations::test_data_model</div>
<div class="t" style="left:40px;top:840.00px;line-height:23px;font-size:21px;color:#00c200;font-family:'Liberation Mono', monospace;transform:scaleX(0.9522);transform-origin:0 0;">=================================================================== 3 passed in 2.45s ====================================================================</div>
<div class="t" style="left:40px;top:903.00px;line-height:23px;font-size:21px;color:#000;font-family:'Liberation Mono', monospace;transform:scaleX(0.9522);transform-origin:0 0;">(venv) C:\Users\ashrika.agarwal\PycharmProjects\api-testing-python&gt;</div>
<div style="left:0px;top:953px;width:1911px;height:2px;background:#c9c9c9;"></div>
<div style="left:0px;top:955px;width:1911px;height:31px;background:#f2f2f2;"></div>
<div style="left:0px;top:986px;width:1911px;height:1px;background:#d4d4d4;"></div>
<div style="left:0px;top:987px;width:1911px;height:29px;background:#f2f2f2;"></div>
<svg style="left:49px;top:965px;" width="16" height="13" viewBox="0 0 16 13"><rect x="0" y="0" width="3" height="3" fill="#6e6e6e"/><rect x="5" y="0.5" width="11" height="2" fill="#6e6e6e"/><rect x="0" y="5" width="3" height="3" fill="#6e6e6e"/><rect x="5" y="5.5" width="11" height="2" fill="#6e6e6e"/><rect x="0" y="10" width="3" height="3" fill="#6e6e6e"/><rect x="5" y="10.5" width="11" height="2" fill="#6e6e6e"/></svg>
<div class="t" style="left:72.2px;top:964.50px;line-height:17px;font-size:16px;color:#000;transform:scaleX(0.9232);transform-origin:0 0;">TODO</div>
<svg style="left:147.5px;top:963px;" width="15" height="15" viewBox="0 0 15 15"><circle cx="7.5" cy="7.5" r="7.5" fill="#6e6e6e"/><rect x="6.3" y="3" width="2.4" height="6" fill="#fff"/><rect x="6.3" y="10.3" width="2.4" height="2.2" fill="#fff"/></svg>
<div class="t" style="left:171.6px;top:964.50px;line-height:17px;font-size:16px;color:#000;transform:scaleX(0.9574);transform-origin:0 0;">Problems</div>
<svg style="left:1780px;top:962px;" width="21" height="20" viewBox="0 0 21 20"><path d="M10 1a9 9 0 1 0 0.1 0z" fill="none" stroke="#6e6e6e" stroke-width="1.6"/><path d="M13 17l6 3l-2-6" fill="#f2f2f2" stroke="#6e6e6e" stroke-width="1.4"/></svg>
<div class="t" style="left:1806px;top:965.60px;line-height:17px;font-size:16px;color:#000;transform:scaleX(0.9354);transform-origin:0 0;">Event Log</div>
<svg style="left:9px;top:994px;" width="18" height="18" viewBox="0 0 18 18"><path d="M4.5 0.5h13v13h-13z" fill="none" stroke="#6e6e6e" stroke-width="1.2"/><path d="M0.6 4v13.4H14" fill="none" stroke="#6e6e6e" stroke-width="1.2"/></svg>
<div class="t" style="left:1351px;top:993.50px;line-height:19px;font-size:17px;color:#000;transform:scaleX(0.9873);transform-origin:0 0;">10:20</div>
<div class="t" style="left:1411.7px;top:993.50px;line-height:19px;font-size:17px;color:#000;transform:scaleX(0.8628);transform-origin:0 0;">CRLF</div>
<div class="t" style="left:1469px;top:993.50px;line-height:19px;font-size:17px;color:#000;transform:scaleX(0.9551);transform-origin:0 0;">UTF-8</div>
<div class="t" style="left:1533px;top:993.50px;line-height:19px;font-size:17px;color:#000;transform:scaleX(0.9847);transform-origin:0 0;">4 spaces</div>
<div class="t" style="left:1619px;top:993.50px;line-height:19px;font-size:17px;color:#000;transform:scaleX(1.0694);transform-origin:0 0;">Python 3.7 (api-testing-python)</div>
<svg style="left:1883px;top:994px;" width="18" height="16" viewBox="0 0 18 16"><path d="M2.5 7V4.5a3.5 3.5 0 0 1 7 0" fill="none" stroke="#6e6e6e" stroke-width="1.6"/><rect x="5" y="7" width="13" height="9" fill="#6e6e6e"/></svg>
<div style="left:0;top:1016px;width:1911px;height:35px;background:linear-gradient(90deg,#213a44 0%,#22363f 40%,#1e2c40 75%,#1c2942 100%);"></div>
<svg style="left:24px;top:1033px;" width="24" height="18" viewBox="0 0 24 18"><path d="M0 3.3L9.9 1.9V11.7H0zM11 1.7L24 0V11.7H11zM0 13h9.9v10L0 21.6zM11 13h13v12L11 23.3z" fill="#fff"/></svg>
<div style="left:72px;top:1016px;width:523px;height:35px;background:#f2f2f2;border-top:1.5px solid #bdbdbd;border-left:1.5px solid #bdbdbd;box-sizing:border-box;"></div>
<svg style="left:93px;top:1033px;" width="24" height="18" viewBox="0 0 24 18"><circle cx="13" cy="10" r="8" fill="none" stroke="#000" stroke-width="2"/><path d="M7.5 15.5L1 22" stroke="#000" stroke-width="2.2"/></svg>
<div class="t" style="left:132px;top:1035.50px;line-height:23px;font-size:21px;color:#000;letter-spacing:0.7px;">Type here to search</div>
<svg style="left:612px;top:1034px;" width="24" height="17" viewBox="0 0 24 17"><circle cx="12" cy="12" r="10.5" fill="none" stroke="#fff" stroke-width="2.6"/></svg>
<svg style="left:683px;top:1033px;" width="26" height="18" viewBox="0 0 26 18"><rect x="1" y="5" width="16" height="14" fill="none" stroke="#fff" stroke-width="1.8"/><path d="M1 1h16" stroke="#fff" stroke-width="1.8"/><path d="M22 0v4M22 8v4M22 16v4" stroke="#fff" stroke-width="1.8"/></svg>
<svg style="left:755px;top:1027.5px;" width="36" height="24" viewBox="0 0 36 24"><defs><linearGradient id="eg2" x1="0" y1="0" x2="1" y2="0.3"><stop offset="0" stop-color="#1da2e6"/><stop offset="0.55" stop-color="#31b8d9"/><stop offset="1" stop-color="#6ee06d"/></linearGradient><linearGradient id="eb2" x1="0" y1="0" x2="0" y2="1"><stop offset="0" stop-color="#1a86dc"/><stop offset="1" stop-color="#0c4f98"/></linearGradient></defs>
<circle cx="18" cy="18" r="17.8" fill="url(#eg2)"/><path d="M0.5 16C2 11 7 9 12 10c-5 3-6 9-3 14H1.5A17.8 17.8 0 0 1 0.5 16z" fill="url(#eb2)"/><circle cx="19" cy="22" r="4.6" fill="#213640"/><path d="M23.6 22A10 6 0 0 0 35.8 19V24H23.6z" fill="#213640" opacity="0"/></svg>
<svg style="left:831px;top:1028.5px;" width="34" height="23" viewBox="0 0 34 23"><circle cx="17" cy="17" r="16.5" fill="#db4437"/>
<path d="M17 17L2.7 8.75A16.5 16.5 0 0 0 17 33.5z" fill="#0f9d58"/><path d="M17 17L17 33.5A16.5 16.5 0 0 0 31.3 8.75z" fill="#ffcd40"/>
<path d="M17 17L2.7 8.75A16.5 16.5 0 0 1 31.3 8.75z" fill="#db4437"/>
<circle cx="17" cy="17" r="7.8" fill="#fff"/><circle cx="17" cy="17" r="6.2" fill="#4285f4"/></svg>
<svg style="left:907px;top:1032px;" width="33" height="19" viewBox="0 0 33 19"><path d="M0 0h11l3 3h19v16H0z" fill="#e8b53a"/><rect x="0" y="4" width="33" height="15" fill="#ffd35c"/><rect x="9" y="12" width="15" height="7" fill="#3f8ee0"/></svg>
<svg style="left:979px;top:1028px;" width="38" height="23" viewBox="0 0 38 23"><circle cx="22" cy="5" r="5" fill="#7b83eb"/><circle cx="33" cy="8" r="4" fill="#5059c9"/><rect x="27" y="13" width="11" height="10" rx="2" fill="#5059c9"/><rect x="13" y="11" width="17" height="12" rx="2" fill="#7b83eb"/><rect x="0" y="11" width="20" height="12" fill="#4b53bc"/><path d="M4 14h12M10 14v9" stroke="#fff" stroke-width="2.6"/></svg>
<svg style="left:1055px;top:1028px;" width="36" height="23" viewBox="0 0 36 23"><defs><linearGradient id="pmg" x1="0" y1="0" x2="0" y2="1"><stop offset="0" stop-color="#ff7a3d"/><stop offset="1" stop-color="#f05a22"/></linearGradient></defs><circle cx="18" cy="18" r="17.3" fill="url(#pmg)" stroke="#fff" stroke-width="1"/><path d="M9 24L24 10" stroke="#fff" stroke-width="3"/><circle cx="26" cy="8" r="2.6" fill="none" stroke="#fff" stroke-width="1.5"/></svg>
<svg style="left:1129px;top:1030px;" width="36" height="21" viewBox="0 0 36 21"><rect x="10" y="0" width="26" height="21" fill="#0a64b8"/><rect x="22" y="0" width="14" height="8" fill="#28a8ea"/><rect x="10" y="8" width="12" height="8" fill="#0f78d4"/><rect x="22" y="8" width="14" height="8" fill="#50d9ff" opacity="0.6"/><rect x="0" y="5" width="18" height="16" fill="#0a5aa8"/><ellipse cx="9" cy="14" rx="4.2" ry="5" fill="none" stroke="#fff" stroke-width="2.2"/></svg>
<div style="left:1187px;top:1016px;width:73px;height:35px;background:#47565f;"></div>
<svg style="left:1208px;top:1031px;" width="30" height="20" viewBox="0 0 30 20"><defs><linearGradient id="pcg2" x1="0" y1="0.3" x2="1" y2="0.5"><stop offset="0.2" stop-color="#21d789"/><stop offset="0.6" stop-color="#fcf84a"/></linearGradient></defs>
<rect x="0" y="0" width="30" height="30" fill="url(#pcg2)"/><rect x="4" y="4" width="22" height="22" fill="#000"/><text x="5.5" y="16" font-family="Liberation Sans" font-weight="bold" font-size="12" fill="#fff">PC</text></svg>
<svg style="left:1601px;top:1040px;" width="20" height="12" viewBox="0 0 20 12"><path d="M1 11L10 2L19 11" fill="none" stroke="#fff" stroke-width="1.6"/></svg>
<svg style="left:1633px;top:1037px;" width="30" height="17" viewBox="0 0 30 17"><path d="M2 0v6M6 0v6M0 6h8v4l-3 3v4" fill="none" stroke="#fff" stroke-width="1.5"/><rect x="10" y="5" width="18" height="12" fill="none" stroke="#fff" stroke-width="1.6"/><rect x="28" y="8" width="2" height="6" fill="#fff"/></svg>
<svg style="left:1674px;top:1037px;" width="28" height="17" viewBox="0 0 28 17"><path d="M1 16A15 15 0 0 1 16 1M5 17A11 11 0 0 1 16 6M9 17A7 7 0 0 1 16 10" fill="none" stroke="#fff" stroke-width="1.6"/></svg>
<svg style="left:1707px;top:1036px;" width="30" height="18" viewBox="0 0 30 18"><path d="M1 7h5l7-6v17h0l-7-5H1z" fill="none" stroke="#fff" stroke-width="1.6"/><path d="M17 5a7 7 0 0 1 0 9M21 2a12 12 0 0 1 0 15" fill="none" stroke="#fff" stroke-width="1.6"/></svg>
<div class="t" style="left:1753px;top:1023.00px;line-height:20px;font-size:18px;color:#fff;transform:scaleX(0.9846);transform-origin:0 0;">2:05 PM</div>
<svg style="left:1855px;top:1036px;" width="30" height="15" viewBox="0 0 30 15"><path d="M1 0h28v15H1z" fill="#fff"/><path d="M5 4h20M5 8h20M5 12h14" stroke="#000" stroke-width="1.4"/></svg>
<div style="left:249px;top:335px;width:346px;height:716px;background:#f2f2f2;border:1px solid #c8c8c8;border-bottom:none;box-sizing:border-box;"></div>
<div style="left:250px;top:369px;width:344px;height:2px;background:#d3d3d3;"></div>
<div style="left:250px;top:500px;width:344px;height:2px;background:#d3d3d3;"></div>
<div style="left:250px;top:567px;width:344px;height:2px;background:#d3d3d3;"></div>
<div style="left:250px;top:635px;width:344px;height:2px;background:#d3d3d3;"></div>
<div style="left:250px;top:671px;width:344px;height:2px;background:#d3d3d3;"></div>
<div style="left:250px;top:801px;width:344px;height:2px;background:#d3d3d3;"></div>
<div style="left:250px;top:868.5px;width:344px;height:2px;background:#d3d3d3;"></div>
<div style="left:250px;top:936px;width:344px;height:2px;background:#d3d3d3;"></div>
<div style="left:250px;top:1004px;width:344px;height:2px;background:#d3d3d3;"></div>
<div style="left:250px;top:1040px;width:344px;height:2px;background:#d3d3d3;"></div>
<div style="left:250px;top:836.3px;width:338px;height:30.5px;background:#2675bf;"></div>
<div class="t" style="left:287.5px;top:343.00px;line-height:20px;font-size:18px;color:#000;transform:scaleX(0.9525);transform-origin:0 0;">New</div>
<svg style="left:574px;top:345.5px;" width="9" height="12" viewBox="0 0 9 12"><path d="M0 0L9 6L0 12z" fill="#6e6e6e"/></svg>
<div style="left:309.02px;top:396.20px;width:4.68px;height:1.5px;background:#000;"></div>
<div class="t" style="left:287.5px;top:379.00px;line-height:20px;font-size:18px;color:#000;transform:scaleX(0.9354);transform-origin:0 0;">Cut</div>
<div class="t" style="left:526.49px;top:379.00px;line-height:20px;font-size:18px;color:#555;transform:scaleX(0.9800);transform-origin:100% 0;">Ctrl+X</div>
<div style="left:287.50px;top:428.20px;width:12.71px;height:1.5px;background:#000;"></div>
<div class="t" style="left:287.5px;top:411.00px;line-height:20px;font-size:18px;color:#000;transform:scaleX(0.9781);transform-origin:0 0;">Copy</div>
<div class="t" style="left:525.50px;top:411.00px;line-height:20px;font-size:18px;color:#555;transform:scaleX(0.9611);transform-origin:100% 0;">Ctrl+C</div>
<div class="t" style="left:287.5px;top:442.30px;line-height:20px;font-size:18px;color:#000;transform:scaleX(0.9369);transform-origin:0 0;">Copy Path...</div>
<div style="left:287.50px;top:491.20px;width:10.72px;height:1.5px;background:#000;"></div>
<div class="t" style="left:287.5px;top:474.00px;line-height:20px;font-size:18px;color:#000;transform:scaleX(0.8929);transform-origin:0 0;">Paste</div>
<div class="t" style="left:526.49px;top:474.00px;line-height:20px;font-size:18px;color:#555;transform:scaleX(0.9800);transform-origin:100% 0;">Ctrl+V</div>
<div style="left:324.96px;top:527.20px;width:12.17px;height:1.5px;background:#000;"></div>
<div class="t" style="left:287.5px;top:510.00px;line-height:20px;font-size:18px;color:#000;transform:scaleX(0.9362);transform-origin:0 0;">Find Usages</div>
<div class="t" style="left:524.48px;top:510.00px;line-height:20px;font-size:18px;color:#555;transform:scaleX(0.9767);transform-origin:100% 0;">Alt+F7</div>
<div style="left:287.50px;top:558.20px;width:4.73px;height:1.5px;background:#000;"></div>
<div class="t" style="left:287.5px;top:541.00px;line-height:20px;font-size:18px;color:#000;transform:scaleX(0.9466);transform-origin:0 0;">Inspect Code...</div>
<div style="left:287.50px;top:594.50px;width:12.44px;height:1.5px;background:#000;"></div>
<div class="t" style="left:287.5px;top:577.30px;line-height:20px;font-size:18px;color:#000;transform:scaleX(0.9570);transform-origin:0 0;">Refactor</div>
<svg style="left:574px;top:579.8px;" width="9" height="12" viewBox="0 0 9 12"><path d="M0 0L9 6L0 12z" fill="#6e6e6e"/></svg>
<div class="t" style="left:287.5px;top:608.80px;line-height:20px;font-size:18px;color:#9c9c9c;transform:scaleX(0.9672);transform-origin:0 0;">Clean Python Compiled Files</div>
<div style="left:355.45px;top:661.80px;width:10.00px;height:1.5px;background:#000;"></div>
<div class="t" style="left:287.5px;top:644.60px;line-height:20px;font-size:18px;color:#000;">Add to Favorites</div>
<svg style="left:574px;top:647.1px;" width="9" height="12" viewBox="0 0 9 12"><path d="M0 0L9 6L0 12z" fill="#6e6e6e"/></svg>
<div style="left:287.50px;top:697.70px;width:12.77px;height:1.5px;background:#000;"></div>
<div class="t" style="left:287.5px;top:680.50px;line-height:20px;font-size:18px;color:#000;transform:scaleX(0.9824);transform-origin:0 0;">Reformat Code</div>
<div class="t" style="left:496.97px;top:680.50px;line-height:20px;font-size:18px;color:#555;transform:scaleX(1.0121);transform-origin:100% 0;">Ctrl+Alt+L</div>
<div style="left:349.84px;top:729.20px;width:10.23px;height:1.5px;background:#000;"></div>
<div class="t" style="left:287.5px;top:712.00px;line-height:20px;font-size:18px;color:#000;transform:scaleX(1.0218);transform-origin:0 0;">Optimize Imports</div>
<div class="t" style="left:492.98px;top:712.00px;line-height:20px;font-size:18px;color:#555;transform:scaleX(1.0319);transform-origin:100% 0;">Ctrl+Alt+O</div>
<div style="left:287.50px;top:760.90px;width:12.02px;height:1.5px;background:#000;"></div>
<div class="t" style="left:287.5px;top:743.70px;line-height:20px;font-size:18px;color:#000;transform:scaleX(0.9249);transform-origin:0 0;">Delete...</div>
<div class="t" style="left:524.97px;top:743.70px;line-height:20px;font-size:18px;color:#555;transform:scaleX(0.9341);transform-origin:100% 0;">Delete</div>
<div class="t" style="left:287.5px;top:774.80px;line-height:20px;font-size:18px;color:#000;transform:scaleX(0.9575);transform-origin:0 0;">Mark as Plain Text</div>
<div class="t" style="left:287.5px;top:810.50px;line-height:20px;font-size:18px;color:#000;transform:scaleX(0.9968);transform-origin:0 0;">Open in Right Split</div>
<div class="t" style="left:487.45px;top:810.50px;line-height:20px;font-size:18px;color:#555;transform:scaleX(0.9749);transform-origin:100% 0;">Shift+Enter</div>
<div class="t" style="left:287.5px;top:843.00px;line-height:20px;font-size:18px;color:#fff;transform:scaleX(0.9868);transform-origin:0 0;">Open In</div>
<svg style="left:574px;top:845.5px;" width="9" height="12" viewBox="0 0 9 12"><path d="M0 0L9 6L0 12z" fill="#fff"/></svg>
<div style="left:334.32px;top:896.20px;width:12.67px;height:1.5px;background:#000;"></div>
<div class="t" style="left:287.5px;top:879.00px;line-height:20px;font-size:18px;color:#000;transform:scaleX(0.9747);transform-origin:0 0;">Local History</div>
<svg style="left:574px;top:881.5px;" width="9" height="12" viewBox="0 0 9 12"><path d="M0 0L9 6L0 12z" fill="#6e6e6e"/></svg>
<div class="t" style="left:287.5px;top:909.70px;line-height:20px;font-size:18px;color:#000;transform:scaleX(0.9954);transform-origin:0 0;">Reload from Disk</div>
<div class="t" style="left:287.5px;top:946.00px;line-height:20px;font-size:18px;color:#000;transform:scaleX(0.9713);transform-origin:0 0;">Compare With...</div>
<div class="t" style="left:525.50px;top:946.00px;line-height:20px;font-size:18px;color:#555;transform:scaleX(0.9941);transform-origin:100% 0;">Ctrl+D</div>
<div style="left:310.08px;top:995.20px;width:14.72px;height:1.5px;background:#000;"></div>
<div class="t" style="left:287.5px;top:978.00px;line-height:20px;font-size:18px;color:#000;transform:scaleX(0.9814);transform-origin:0 0;">Compare File with Editor</div>
<div class="t" style="left:287.5px;top:1014.00px;line-height:20px;font-size:18px;color:#000;transform:scaleX(0.9786);transform-origin:0 0;">Mark Directory as</div>
<svg style="left:574px;top:1016.5px;" width="9" height="12" viewBox="0 0 9 12"><path d="M0 0L9 6L0 12z" fill="#6e6e6e"/></svg>
<svg style="left:256px;top:378px;" width="21" height="20" viewBox="0 0 21 20"><circle cx="3.8" cy="4" r="2.7" fill="none" stroke="#6e6e6e" stroke-width="2.2"/><circle cx="3.8" cy="15.5" r="2.7" fill="none" stroke="#6e6e6e" stroke-width="2.2"/><path d="M5.8 6L20 19.5M5.8 13.5L20 0.5" stroke="#6e6e6e" stroke-width="2.6"/></svg>
<svg style="left:258px;top:409px;" width="18" height="19" viewBox="0 0 18 19"><path d="M0 0h13v2.5H2.5V14H0z" fill="#6e6e6e"/><rect x="4" y="4" width="14" height="15" fill="#6e6e6e"/><path d="M7 8h8M7 11.5h8M7 15h8" stroke="#f2f2f2" stroke-width="1.5"/></svg>
<svg style="left:258.5px;top:471.5px;" width="17" height="20" viewBox="0 0 17 20"><rect x="1.5" y="3.5" width="14" height="15" fill="none" stroke="#6e6e6e" stroke-width="3"/><rect x="4.5" y="0.5" width="8" height="4.5" fill="#6e6e6e"/></svg>
<svg style="left:250px;top:765px;" width="30" height="32" viewBox="0 0 30 32"><rect x="9.7" y="8.7" width="14.6" height="20.6" fill="#a7b1b9"/><rect x="5" y="7" width="10.3" height="10.3" fill="#a7b1b9"/><path d="M7 9L14 15.7M14 9L7 15.7" stroke="#444" stroke-width="1.5"/><path d="M12.7 18h8.6M12.7 21.3h8.6M12.7 24.3h5.3" stroke="#444" stroke-width="1.5"/></svg>
<svg style="left:250px;top:800px;" width="30" height="32" viewBox="0 0 30 32"><rect x="10.6" y="12.2" width="14.2" height="14.2" fill="none" stroke="#6e6e6e" stroke-width="1.8"/><path d="M17.7 12.2v14.2" stroke="#6e6e6e" stroke-width="1.8"/></svg>
<svg style="left:250px;top:900px;" width="30" height="30" viewBox="0 0 30 30"><path d="M24.2 18A7.2 7.2 0 0 0 12.4 13.4" fill="none" stroke="#6e6e6e" stroke-width="3.2"/><path d="M8 10.7V17.7H15z" fill="#6e6e6e"/><path d="M9.8 20A7.2 7.2 0 0 0 21.6 24.6" fill="none" stroke="#6e6e6e" stroke-width="3.2"/><path d="M26 20V27H19z" fill="#6e6e6e"/></svg>
<svg style="left:250px;top:940px;" width="30" height="30" viewBox="0 0 30 30"><path d="M21.3 4.3L15.3 10.3L21.3 16.3z" fill="#3d9fd8"/><rect x="21" y="8.8" width="6.7" height="3" fill="#3d9fd8"/><path d="M12.3 13.3L18.7 19.3L12.3 25.7z" fill="#3d9fd8"/><rect x="6" y="17.8" width="6.6" height="3" fill="#3d9fd8"/></svg>
<svg style="left:256px;top:1041px;" width="22" height="10" viewBox="0 0 22 10"><circle cx="10.5" cy="15" r="8.5" fill="#1a1a1a"/></svg>
<div style="left:589px;top:831px;width:275px;height:128px;background:#f2f2f2;border:1px solid #c8c8c8;box-sizing:border-box;"></div>
<div style="left:590px;top:895px;width:268px;height:31.5px;background:#2675bf;"></div>
<div class="t" style="left:626.5px;top:839.00px;line-height:20px;font-size:18px;color:#000;transform:scaleX(0.9474);transform-origin:0 0;">Explorer</div>
<div style="left:657.86px;top:888.20px;width:11.07px;height:1.5px;background:#000;"></div>
<div class="t" style="left:626.5px;top:871.00px;line-height:20px;font-size:18px;color:#000;transform:scaleX(0.9221);transform-origin:0 0;">File Path</div>
<div class="t" style="left:744.46px;top:871.00px;line-height:20px;font-size:18px;color:#555;transform:scaleX(1.0046);transform-origin:100% 0;">Ctrl+Alt+F12</div>
<div class="t" style="left:626.5px;top:902.00px;line-height:20px;font-size:18px;color:#fff;transform:scaleX(0.9392);transform-origin:0 0;">Browser</div>
<svg style="left:844px;top:905px;" width="9" height="12" viewBox="0 0 9 12"><path d="M0 0L9 6L0 12z" fill="#fff"/></svg>
<div class="t" style="left:626.5px;top:934.00px;line-height:20px;font-size:18px;color:#000;transform:scaleX(0.9703);transform-origin:0 0;">Terminal</div>
<svg style="left:592px;top:897.0px;" width="30" height="30" viewBox="0 0 30 30"><circle cx="14" cy="13.7" r="10.6" fill="#8ba3bd"/><path d="M17.1 6.3L21.7 9.4L22.6 14L22.3 17.1L20.6 18.9L17.1 17.7V14.3H10V12.6L13.1 12V9.1L16.6 8.3z" fill="#2675bf"/><path d="M6 12.9L10.9 17.1L11.4 19.4L12.9 20.6L12.6 22L9.4 21.1L6.6 17.7z" fill="#2675bf"/><circle cx="14" cy="13.7" r="9.6" fill="none" stroke="#8ba3bd" stroke-width="2"/></svg>
<svg style="left:598px;top:933px;" width="18" height="17" viewBox="0 0 18 17"><rect x="0" y="0" width="18" height="17" fill="#555"/><path d="M3.5 4l4 3.5l-4 3.5" fill="none" stroke="#f2f2f2" stroke-width="1.4"/><path d="M9 12.5h5" stroke="#f2f2f2" stroke-width="1.4"/></svg>
<div style="left:858px;top:708px;width:196px;height:223px;background:#f2f2f2;border:1px solid #c8c8c8;box-sizing:border-box;"></div>
<div style="left:859px;top:740.6px;width:193px;height:31.5px;background:#2675bf;"></div>
<div class="t" style="left:896.5px;top:716.00px;line-height:20px;font-size:18px;color:#000;transform:scaleX(0.9731);transform-origin:0 0;">Default</div>
<div class="t" style="left:896.5px;top:748.00px;line-height:20px;font-size:18px;color:#fff;transform:scaleX(0.9763);transform-origin:0 0;">Chrome</div>
<div class="t" style="left:896.5px;top:779.00px;line-height:20px;font-size:18px;color:#000;transform:scaleX(0.9634);transform-origin:0 0;">Firefox</div>
<div class="t" style="left:896.5px;top:811.00px;line-height:20px;font-size:18px;color:#000;transform:scaleX(0.9357);transform-origin:0 0;">Safari</div>
<div class="t" style="left:896.5px;top:842.00px;line-height:20px;font-size:18px;color:#000;transform:scaleX(0.9695);transform-origin:0 0;">Opera</div>
<div class="t" style="left:896.5px;top:874.00px;line-height:20px;font-size:18px;color:#000;transform:scaleX(0.9694);transform-origin:0 0;">Internet Explorer</div>
<div class="t" style="left:896.5px;top:905.00px;line-height:20px;font-size:18px;color:#000;transform:scaleX(0.9396);transform-origin:0 0;">Edge</div>
<svg style="left:862.1px;top:711.0999999999999px;" width="30" height="30" viewBox="0 0 30 30"><circle cx="14" cy="13.7" r="10.6" fill="#adb6bd"/><path d="M17.1 6.3L21.7 9.4L22.6 14L22.3 17.1L20.6 18.9L17.1 17.7V14.3H10V12.6L13.1 12V9.1L16.6 8.3z" fill="#f2f2f2"/><path d="M6 12.9L10.9 17.1L11.4 19.4L12.9 20.6L12.6 22L9.4 21.1L6.6 17.7z" fill="#f2f2f2"/><circle cx="14" cy="13.7" r="9.6" fill="none" stroke="#adb6bd" stroke-width="2"/></svg>
<svg style="left:865px;top:746px;" width="22" height="22" viewBox="0 0 22 22"><circle cx="11" cy="11" r="10.5" fill="#db4437"/>
<path d="M11 11L1.9 5.75A10.5 10.5 0 0 0 11 21.5z" fill="#0f9d58"/><path d="M11 11L11 21.5A10.5 10.5 0 0 0 20.1 5.75z" fill="#ffcd40"/>
<path d="M11 11L1.9 5.75A10.5 10.5 0 0 1 20.1 5.75z" fill="#db4437"/>
<circle cx="11" cy="11" r="5" fill="#fff"/><circle cx="11" cy="11" r="3.9" fill="#4285f4"/></svg>
<svg style="left:865px;top:777px;" width="22" height="23" viewBox="0 0 22 23"><defs><radialGradient id="ffg" cx="0.6" cy="0.2" r="0.9"><stop offset="0" stop-color="#ffe226"/><stop offset="0.35" stop-color="#ff980e"/><stop offset="0.7" stop-color="#ff3750"/><stop offset="1" stop-color="#e31587"/></radialGradient></defs>
<circle cx="11" cy="12.5" r="10.3" fill="url(#ffg)"/><path d="M12 0c1 2 5 4 5 8" fill="none" stroke="#ffbd4f" stroke-width="3"/><circle cx="10.5" cy="12.5" r="5.2" fill="#7542e5"/><path d="M5 10c2-3 6-3 8-1" fill="none" stroke="#ff6a2a" stroke-width="2.5"/></svg>
<svg style="left:865px;top:809px;" width="22" height="22" viewBox="0 0 22 22"><circle cx="11" cy="11" r="10.5" fill="#5aa7e8"/><circle cx="11" cy="11" r="8.5" fill="#2f87e0"/><path d="M16.5 5.5L12.2 12.2L5.5 16.5L9.8 9.8z" fill="#fff"/><path d="M16.5 5.5L12.2 12.2L9.8 9.8z" fill="#ff3b30"/></svg>
<svg style="left:865px;top:840px;" width="22" height="22" viewBox="0 0 22 22"><ellipse cx="11" cy="11" rx="10.2" ry="10.5" fill="#e0141f"/><ellipse cx="11" cy="11" rx="4.5" ry="7.5" fill="#f2f2f2"/></svg>
<svg style="left:865px;top:871px;" width="23" height="22" viewBox="0 0 23 22"><path d="M3 13a8 8 0 0 1 16 -2H8a3.5 3.5 0 0 0 7 1.5h4a8 8 0 0 1 -16 0.5z" fill="#1ebbee"/><path d="M8.2 9.5a3 3 0 0 1 6 0z" fill="#f2f2f2"/>
<path d="M2 19c-3-3 4-14 14-17c5-1 6 2 4 5" fill="none" stroke="#1ebbee" stroke-width="2"/><path d="M4 17c1 3 6 1 8-1" fill="none" stroke="#1ebbee" stroke-width="1.6"/></svg>
<svg style="left:865px;top:903px;" width="22" height="22" viewBox="0 0 22 22"><defs><linearGradient id="edg" x1="0" y1="0" x2="1" y2="1"><stop offset="0" stop-color="#35c1f1"/><stop offset="0.6" stop-color="#36c28a"/><stop offset="1" stop-color="#66eb6e"/></linearGradient><linearGradient id="edb" x1="0" y1="0" x2="0" y2="1"><stop offset="0" stop-color="#1a7fd6"/><stop offset="1" stop-color="#0c59a4"/></linearGradient></defs>
<path d="M1 10a10.5 10.5 0 0 1 20.8 1.5c0 3-2.5 4.5-5 4.5c-2 0-4-0.5-4-2c0-1 1-1.5 1-3c0-2-2.5-4-5.5-4C4 7 1 9 1 12z" fill="url(#edg)"/>
<path d="M1 12c0-3 3-5 7-5c-3 2-3 6-1 9c2 3 6 5.5 10 4A10.5 10.5 0 0 1 1 12z" fill="url(#edb)"/></svg>
</body></html>
